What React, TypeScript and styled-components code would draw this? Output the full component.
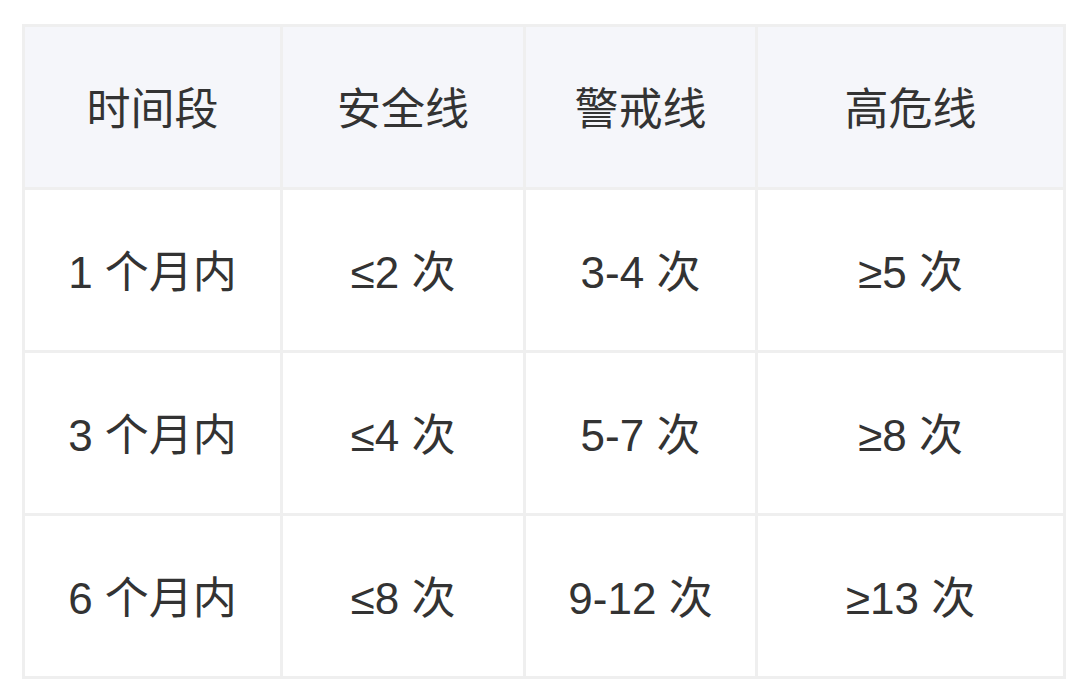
import React from 'react';
import styled, { createGlobalStyle } from 'styled-components';

const GlobalStyle = createGlobalStyle`
	html, body {
		margin: 0;
		padding: 0;
		background: #ffffff;
	}
	body {
		font-family: 'Liberation Sans', 'Noto Sans CJK SC', sans-serif;
	}
`;

const Page = styled.div`
	padding: 24px 14px 18px 22px;
`;

const Grid = styled.div`
	display: grid;
	grid-template-columns: 255px 240px 229px 305px;
	grid-auto-rows: 160px;
	gap: 3px;
	padding: 3px;
	width: 1044px;
	box-sizing: border-box;
	background: #efefef;
`;

const Cell = styled.div<{ $head?: boolean }>`
	display: flex;
	align-items: center;
	justify-content: center;
	padding-top: 5px;
	box-sizing: border-box;
	background: ${(p) => (p.$head ? '#f5f6fa' : '#ffffff')};
	color: #333333;
	font-size: 44px;
	line-height: 1;
`;

const headers = ['时间段', '安全线', '警戒线', '高危线'];
const rows = [
	['1 个月内', '≤2 次', '3-4 次', '≥5 次'],
	['3 个月内', '≤4 次', '5-7 次', '≥8 次'],
	['6 个月内', '≤8 次', '9-12 次', '≥13 次'],
];

export default function App() {
	return (
		<>
			<GlobalStyle />
			<Page>
				<Grid>
					{headers.map((h) => (
						<Cell key={h} $head>
							{h}
						</Cell>
					))}
					{rows.map((row) => row.map((text, i) => <Cell key={row[0] + i}>{text}</Cell>))}
				</Grid>
			</Page>
		</>
	);
}
